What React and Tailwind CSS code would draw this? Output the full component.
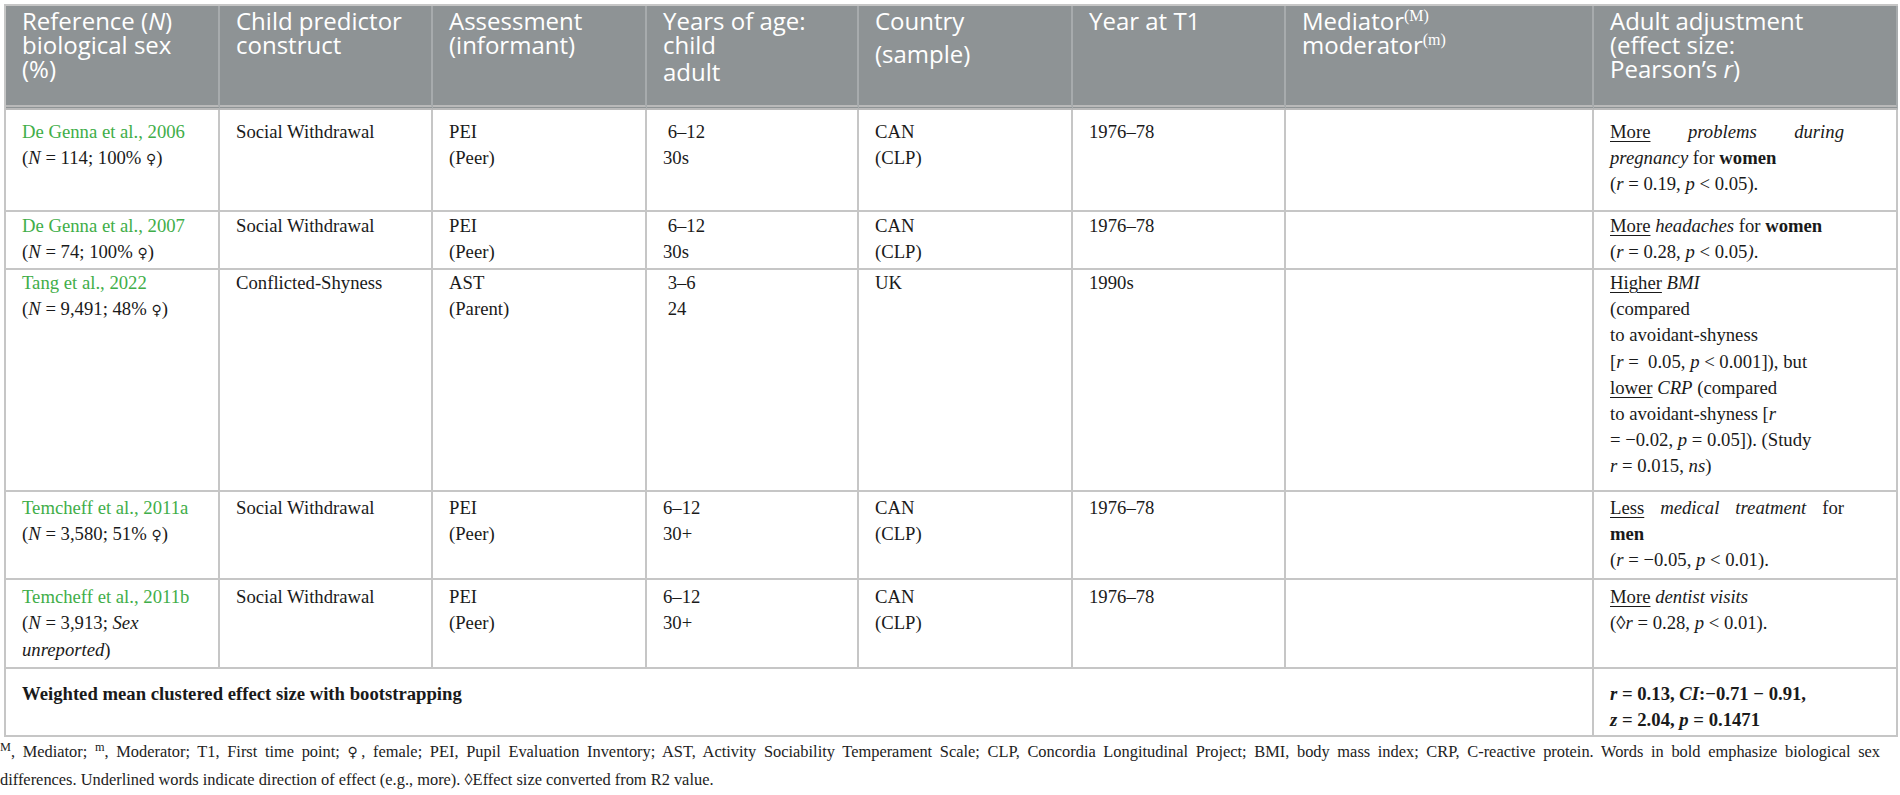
const cell = "border-r-2 border-b-2 border-[#c6c6c6] px-4 align-top text-left";
const head = "bg-[#8e9395] text-white border-r-2 border-r-[#a7abad] border-b-[5px] border-double border-b-[#b9b9b9] px-4 pt-[3px] pb-[21px] align-top text-left font-normal text-[24px] leading-[24px]";

// vertical padding per body row, tuned against the reference
const pads = [
  "pt-[9px] pb-[12px]",
  "pt-[1px] pb-[2px]",
  "pt-0 pb-[10px]",
  "pt-[3px] pb-[5px]",
  "pt-[4px] pb-[4px]",
];

function G({ children }) {
  return <span className="text-[#3fae49]">{children}</span>;
}

function U({ children }) {
  return <span className="underline underline-offset-[3px] decoration-1">{children}</span>;
}

function Fem() {
  return <span className="font-['DejaVu_Serif',serif] text-[14px]">♀</span>;
}

const rows = [
  {
    ref: 'De Genna et al., 2006',
    n: <>(<i>N</i> = 114; 100% <Fem />)</>,
    construct: 'Social Withdrawal',
    assess: ['PEI', '(Peer)'],
    age: ['\u00a06–12', '30s'],
    country: ['CAN', '(CLP)'],
    year: '1976–78',
    adult: (
      <>
        <U>More</U> <i>problems during pregnancy</i> for <b>women</b>
        <br />(<i>r</i> = 0.19, <i>p</i> &lt; 0.05).
      </>
    ),
  },
  {
    ref: 'De Genna et al., 2007',
    n: <>(<i>N</i> = 74; 100% <Fem />)</>,
    construct: 'Social Withdrawal',
    assess: ['PEI', '(Peer)'],
    age: ['\u00a06–12', '30s'],
    country: ['CAN', '(CLP)'],
    year: '1976–78',
    adult: (
      <>
        <U>More</U> <i>headaches</i> for <b>women</b>
        <br />(<i>r</i> = 0.28, <i>p</i> &lt; 0.05<i>)</i>.
      </>
    ),
  },
  {
    ref: 'Tang et al., 2022',
    n: <>(<i>N</i> = 9,491; 48% <Fem />)</>,
    construct: 'Conflicted-Shyness',
    assess: ['AST', '(Parent)'],
    age: ['\u00a03–6', '\u00a024'],
    country: ['UK'],
    year: '1990s',
    adult: (
      <>
        <U>Higher</U> <i>BMI</i>
        <br />(compared
        <br />to avoidant-shyness
        <br />[<i>r</i> =&nbsp; 0.05, <i>p</i> &lt; 0.001]), but
        <br /><U>lower</U> <i>CRP</i> (compared
        <br />to avoidant-shyness [<i>r</i>
        <br />= −0.02, <i>p</i> = 0.05]). (Study
        <br /><i>r</i> = 0.015, <i>ns</i>)
      </>
    ),
  },
  {
    ref: 'Temcheff et al., 2011a',
    n: <>(<i>N</i> = 3,580; 51% <Fem />)</>,
    construct: 'Social Withdrawal',
    assess: ['PEI', '(Peer)'],
    age: ['6–12', '30+'],
    country: ['CAN', '(CLP)'],
    year: '1976–78',
    adult: (
      <>
        <U>Less</U> <i>medical treatment</i> for <b>men</b>
        <br />(<i>r</i> = −0.05, <i>p</i> &lt; 0.01).
      </>
    ),
  },
  {
    ref: 'Temcheff et al., 2011b',
    n: <>(<i>N</i> = 3,913; <i>Sex unreported</i>)</>,
    construct: 'Social Withdrawal',
    assess: ['PEI', '(Peer)'],
    age: ['6–12', '30+'],
    country: ['CAN', '(CLP)'],
    year: '1976–78',
    adult: (
      <>
        <U>More</U> <i>dentist visits</i>
        <br />(◊<i>r</i> = 0.28, <i>p</i> &lt; 0.01).
      </>
    ),
  },
];

function Lines({ items }) {
  return items.map((t, i) => (
    <div key={i}>{t}</div>
  ));
}

export default function App() {
  return (
    <div className="min-h-screen bg-white text-[#1a1a1a] font-['Liberation_Serif','DejaVu_Serif',serif]">
      <div className="pt-[4px] pl-[4px]">
        <table className="table-fixed w-[1892px] border-separate border-spacing-0 border-l-2 border-t-2 border-[#c6c6c6] text-[18.7px] leading-[26.2px]">
          <colgroup>
            <col className="w-[214px]" />
            <col className="w-[213px]" />
            <col className="w-[214px]" />
            <col className="w-[212px]" />
            <col className="w-[214px]" />
            <col className="w-[213px]" />
            <col className="w-[308px]" />
            <col className="w-[304px]" />
          </colgroup>
          <thead className="font-['Open_Sans',sans-serif]">
            <tr>
              <th className={head}>
                Reference (<i>N</i>)<br />biological sex<br />(%)
              </th>
              <th className={head}>
                Child predictor<br />construct
              </th>
              <th className={head}>
                Assessment<br />(informant)
              </th>
              <th className={head}>
                Years of age:<br />child<br /><span className="inline-block mt-[3px]">adult</span>
              </th>
              <th className={head}>
                Country<br /><span className="inline-block mt-[9px]">(sample)</span>
              </th>
              <th className={head}>Year at T1</th>
              <th className={head}>
                Mediator<sup className="font-['Liberation_Serif',serif] text-[16px] top-[-9px]">(M)</sup>
                <br />moderator<sup className="font-['Liberation_Serif',serif] text-[16px] top-[-9px]">(m)</sup>
              </th>
              <th className={head}>
                Adult adjustment<br />(effect size:<br />Pearson’s <i>r</i>)
              </th>
            </tr>
          </thead>
          <tbody>
            {rows.map((r, i) => (
              <tr key={i}>
                <td className={cell + " " + pads[i]}>
                  <G>{r.ref}</G>
                  <div>{r.n}</div>
                </td>
                <td className={cell + " " + pads[i]}>{r.construct}</td>
                <td className={cell + " " + pads[i]}>
                  <Lines items={r.assess} />
                </td>
                <td className={cell + " " + pads[i]}>
                  <Lines items={r.age} />
                </td>
                <td className={cell + " " + pads[i]}>
                  <Lines items={r.country} />
                </td>
                <td className={cell + " " + pads[i]}>{r.year}</td>
                <td className={cell + " " + pads[i]}></td>
                <td className={cell + " " + pads[i]}>
                  <div className="w-[234px] text-justify">{r.adult}</div>
                </td>
              </tr>
            ))}
            <tr>
              <td colSpan={7} className={cell + " font-bold pt-[12px] pb-[2px]"}>
                Weighted mean clustered effect size with bootstrapping
              </td>
              <td className={cell + " font-bold pt-[12px] pb-[2px]"}>
                <i>r</i> = 0.13, <i>CI</i>:−0.71 − 0.91,
                <br />
                <i>z</i> = 2.04, <i>p</i> = 0.1471
              </td>
            </tr>
          </tbody>
        </table>
      </div>
      <div className="pt-[1px] text-[16.4px] leading-[27px] text-[#222]">
        <div className="w-[1880px] text-justify [text-align-last:justify]">
          <sup>M</sup>, Mediator; <sup>m</sup>, Moderator; T1, First time point; <Fem />, female; PEI, Pupil Evaluation Inventory; AST, Activity Sociability Temperament Scale; CLP, Concordia Longitudinal Project; BMI, body mass index; CRP, C-reactive protein. Words in bold emphasize biological sex
        </div>
        <div className="whitespace-nowrap">
          differences. Underlined words indicate direction of effect (e.g., more). ◊Effect size converted from R2 value.
        </div>
      </div>
    </div>
  );
}
